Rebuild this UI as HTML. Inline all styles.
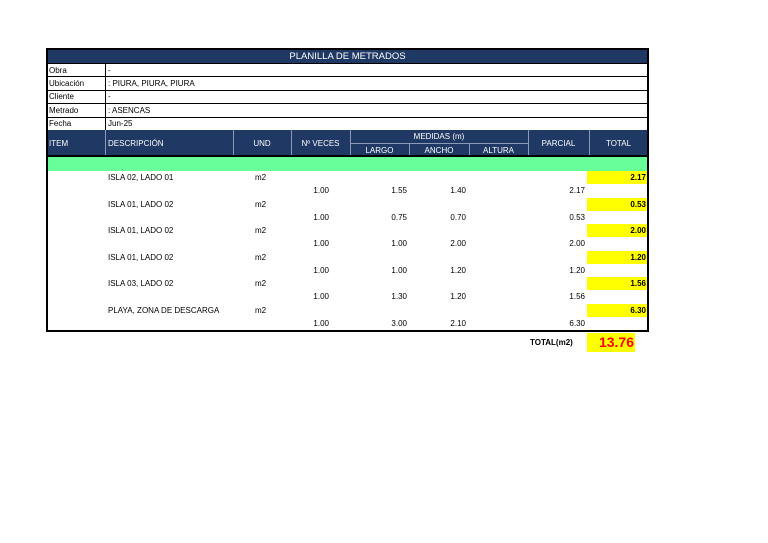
<!DOCTYPE html>
<html><head><meta charset="utf-8"><style>
body{margin:0;width:768px;height:543px;background:#fff;position:relative;font-family:"Liberation Sans",sans-serif;font-size:8px;color:#000;overflow:hidden}
div{position:absolute;box-sizing:border-box}
.t{white-space:nowrap;line-height:13px}
.hd{background:#1f3864;color:#fff;text-align:center}
.r{text-align:right}
</style></head><body>
<div style="left:46px;top:48px;width:603px;height:284px;border:2px solid #000"></div>
<div class="hd t" style="left:48px;top:50px;width:599px;height:13px;font-size:9.5px;line-height:13px">PLANILLA DE METRADOS</div>
<div style="left:48px;top:63px;width:599px;height:67px;border-top:1px solid #000"></div>
<div style="left:48px;top:76px;width:599px;border-top:1px solid #000"></div>
<div style="left:48px;top:90px;width:599px;border-top:1px solid #000"></div>
<div style="left:48px;top:103px;width:599px;border-top:1px solid #000"></div>
<div style="left:48px;top:117px;width:599px;border-top:1px solid #000"></div>
<div style="left:105px;top:63px;height:67px;border-left:1px solid #000"></div>
<div class="t" style="left:49px;top:64px">Obra</div><div class="t" style="left:108px;top:64px">-</div>
<div class="t" style="left:49px;top:77px">Ubicación</div><div class="t" style="left:108px;top:77px">: PIURA, PIURA, PIURA</div>
<div class="t" style="left:49px;top:90px">Cliente</div><div class="t" style="left:108px;top:90px">-</div>
<div class="t" style="left:49px;top:104px">Metrado</div><div class="t" style="left:108px;top:104px">: ASENCAS</div>
<div class="t" style="left:49px;top:117px">Fecha</div><div class="t" style="left:108px;top:117px">Jun-25</div>
<div class="hd" style="left:48px;top:130px;width:599px;height:27px;border-bottom:2px solid #000"></div>
<div class="t" style="left:49px;top:137px;color:#fff">ITEM</div>
<div class="t" style="left:108px;top:137px;color:#fff">DESCRIPCIÓN</div>
<div class="t" style="left:233px;top:137px;width:58px;text-align:center;color:#fff">UND</div>
<div class="t" style="left:291px;top:137px;width:59px;text-align:center;color:#fff">Nº VECES</div>
<div class="t" style="left:350px;top:130px;width:178px;text-align:center;color:#fff">MEDIDAS (m)</div>
<div class="t" style="left:350px;top:144px;width:59px;text-align:center;color:#fff">LARGO</div>
<div class="t" style="left:409px;top:144px;width:60px;text-align:center;color:#fff">ANCHO</div>
<div class="t" style="left:469px;top:144px;width:59px;text-align:center;color:#fff">ALTURA</div>
<div class="t" style="left:528px;top:137px;width:61px;text-align:center;color:#fff">PARCIAL</div>
<div class="t" style="left:589px;top:137px;width:59px;text-align:center;color:#fff">TOTAL</div>
<div style="left:105px;top:130px;height:25px;border-left:1px solid #8a9bb8"></div>
<div style="left:233px;top:130px;height:25px;border-left:1px solid #8a9bb8"></div>
<div style="left:291px;top:130px;height:25px;border-left:1px solid #8a9bb8"></div>
<div style="left:350px;top:130px;height:25px;border-left:1px solid #8a9bb8"></div>
<div style="left:528px;top:130px;height:25px;border-left:1px solid #8a9bb8"></div>
<div style="left:589px;top:130px;height:25px;border-left:1px solid #8a9bb8"></div>
<div style="left:409px;top:143px;height:12px;border-left:1px solid #8a9bb8"></div>
<div style="left:469px;top:143px;height:12px;border-left:1px solid #8a9bb8"></div>
<div style="left:350px;top:143px;width:178px;border-top:1px solid #8a9bb8"></div>
<div style="left:48px;top:157px;width:599px;height:14px;background:#66ff99"></div>

<div style="left:587px;top:171px;width:60px;height:13px;background:#ffff00"></div><div class="t r" style="left:587px;top:171px;width:59px;font-weight:bold">2.17</div>
<div class="t" style="left:108px;top:171px">ISLA 02, LADO 01</div><div class="t" style="left:255px;top:171px">m2</div>
<div class="t r" style="left:291px;top:184px;width:38px">1.00</div><div class="t r" style="left:350px;top:184px;width:57px">1.55</div><div class="t r" style="left:409px;top:184px;width:57px">1.40</div><div class="t r" style="left:528px;top:184px;width:57px">2.17</div>

<div style="left:587px;top:198px;width:60px;height:13px;background:#ffff00"></div><div class="t r" style="left:587px;top:198px;width:59px;font-weight:bold">0.53</div>
<div class="t" style="left:108px;top:198px">ISLA 01, LADO 02</div><div class="t" style="left:255px;top:198px">m2</div>
<div class="t r" style="left:291px;top:211px;width:38px">1.00</div><div class="t r" style="left:350px;top:211px;width:57px">0.75</div><div class="t r" style="left:409px;top:211px;width:57px">0.70</div><div class="t r" style="left:528px;top:211px;width:57px">0.53</div>

<div style="left:587px;top:224px;width:60px;height:13px;background:#ffff00"></div><div class="t r" style="left:587px;top:224px;width:59px;font-weight:bold">2.00</div>
<div class="t" style="left:108px;top:224px">ISLA 01, LADO 02</div><div class="t" style="left:255px;top:224px">m2</div>
<div class="t r" style="left:291px;top:237px;width:38px">1.00</div><div class="t r" style="left:350px;top:237px;width:57px">1.00</div><div class="t r" style="left:409px;top:237px;width:57px">2.00</div><div class="t r" style="left:528px;top:237px;width:57px">2.00</div>

<div style="left:587px;top:251px;width:60px;height:13px;background:#ffff00"></div><div class="t r" style="left:587px;top:251px;width:59px;font-weight:bold">1.20</div>
<div class="t" style="left:108px;top:251px">ISLA 01, LADO 02</div><div class="t" style="left:255px;top:251px">m2</div>
<div class="t r" style="left:291px;top:264px;width:38px">1.00</div><div class="t r" style="left:350px;top:264px;width:57px">1.00</div><div class="t r" style="left:409px;top:264px;width:57px">1.20</div><div class="t r" style="left:528px;top:264px;width:57px">1.20</div>

<div style="left:587px;top:277px;width:60px;height:13px;background:#ffff00"></div><div class="t r" style="left:587px;top:277px;width:59px;font-weight:bold">1.56</div>
<div class="t" style="left:108px;top:277px">ISLA 03, LADO 02</div><div class="t" style="left:255px;top:277px">m2</div>
<div class="t r" style="left:291px;top:290px;width:38px">1.00</div><div class="t r" style="left:350px;top:290px;width:57px">1.30</div><div class="t r" style="left:409px;top:290px;width:57px">1.20</div><div class="t r" style="left:528px;top:290px;width:57px">1.56</div>

<div style="left:587px;top:304px;width:60px;height:13px;background:#ffff00"></div><div class="t r" style="left:587px;top:304px;width:59px;font-weight:bold">6.30</div>
<div class="t" style="left:108px;top:304px">PLAYA, ZONA DE DESCARGA</div><div class="t" style="left:255px;top:304px">m2</div>
<div class="t r" style="left:291px;top:317px;width:38px">1.00</div><div class="t r" style="left:350px;top:317px;width:57px">3.00</div><div class="t r" style="left:409px;top:317px;width:57px">2.10</div><div class="t r" style="left:528px;top:317px;width:57px">6.30</div>

<div class="t" style="left:530px;top:336px;font-weight:bold">TOTAL(m2)</div>
<div style="left:587px;top:333px;width:48px;height:19px;background:#ffff00"></div>
<div class="t r" style="left:587px;top:333px;width:47px;line-height:19px;font-size:14px;font-weight:bold;color:#ff0000">13.76</div>
</body></html>
